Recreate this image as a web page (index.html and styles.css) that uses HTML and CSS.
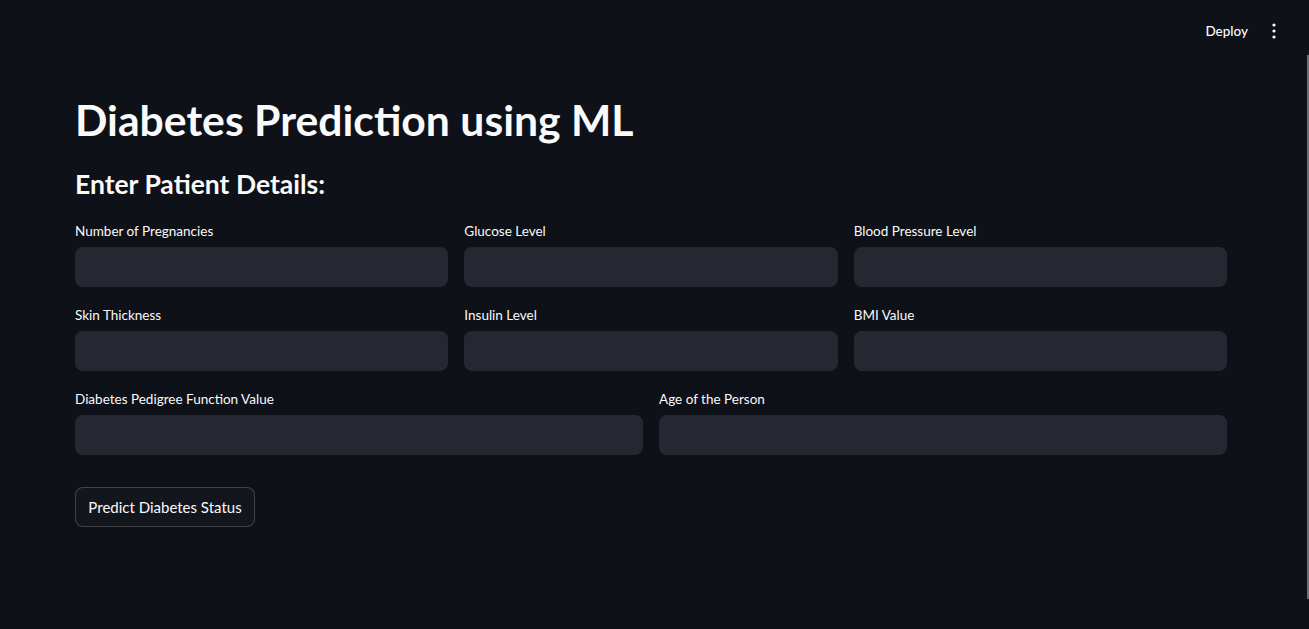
FILE: index.html
```html
<!DOCTYPE html>
<html lang="en">
<head>
<meta charset="utf-8">
<title>Diabetes Prediction</title>
<link rel="stylesheet" href="styles.css">
</head>
<body>
<div class="app">
  <header class="topbar">
    <span class="deploy">Deploy</span>
    <span class="menu" aria-label="menu">
      <svg width="4" height="16" viewBox="0 0 4 16"><circle cx="2" cy="2" r="1.6" fill="#fafafa"/><circle cx="2" cy="8" r="1.6" fill="#fafafa"/><circle cx="2" cy="14" r="1.6" fill="#fafafa"/></svg>
    </span>
  </header>
  <main class="block">
    <h1 class="title">Diabetes Prediction using ML</h1>
    <h3 class="subtitle">Enter Patient Details:</h3>
    <div class="grid three">
      <div class="field"><label>Number of Pregnancies</label><div class="input"></div></div>
      <div class="field"><label>Glucose Level</label><div class="input"></div></div>
      <div class="field"><label>Blood Pressure Level</label><div class="input"></div></div>
    </div>
    <div class="grid three">
      <div class="field"><label>Skin Thickness</label><div class="input"></div></div>
      <div class="field"><label>Insulin Level</label><div class="input"></div></div>
      <div class="field"><label>BMI Value</label><div class="input"></div></div>
    </div>
    <div class="grid two">
      <div class="field"><label>Diabetes Pedigree Function Value</label><div class="input"></div></div>
      <div class="field"><label>Age of the Person</label><div class="input"></div></div>
    </div>
    <button class="btn">Predict Diabetes Status</button>
  </main>
  <div class="scrollbar"></div>
</div>
</body>
</html>
```
FILE: styles.css
```css
html, body {
  margin: 0;
  padding: 0;
  background: #0e1117;
  color: #fafafa;
  font-family: "Lato", "Open Sans", sans-serif;
}
.app {
  position: relative;
  width: 1309px;
  height: 629px;
  overflow: hidden;
}
.topbar {
  height: 62px;
  display: flex;
  justify-content: flex-end;
  align-items: center;
  padding-right: 33px;
  gap: 24px;
}
.deploy {
  font-size: 13.5px;
  font-weight: 500;
  color: #fafafa;
}
.menu {
  display: flex;
  align-items: center;
}
.block {
  width: 1152px;
  margin-left: 75px;
}
.title {
  margin: 31px 0 0 0;
  font-size: 42.7px;
  font-weight: 700;
  line-height: 54px;
  letter-spacing: 0;
}
.subtitle {
  margin: 19px 0 0 0;
  font-size: 26.5px;
  font-weight: 700;
  line-height: 36px;
}
.grid {
  display: grid;
  gap: 16px;
}
.grid.three { grid-template-columns: repeat(3, 1fr); }
.grid.two { grid-template-columns: repeat(2, 1fr); }
.grid + .grid { margin-top: 18px; }
.subtitle + .grid { margin-top: 19px; }
.field label {
  display: block;
  font-size: 13.5px;
  line-height: 20px;
  height: 26px;
  color: #fafafa;
}
.input {
  height: 40px;
  border-radius: 8px;
  background: #262730;
}
.btn {
  margin-top: 32px;
  height: 40px;
  padding: 0 12px;
  border: 1px solid rgba(250, 250, 250, 0.2);
  border-radius: 8px;
  background: #13161d;
  color: #fafafa;
  font-family: inherit;
  font-size: 15px;
  width: 180px;
}
.scrollbar {
  position: absolute;
  right: 0;
  top: 55px;
  width: 2px;
  height: 544px;
  background: #6e6e70;
}
```
